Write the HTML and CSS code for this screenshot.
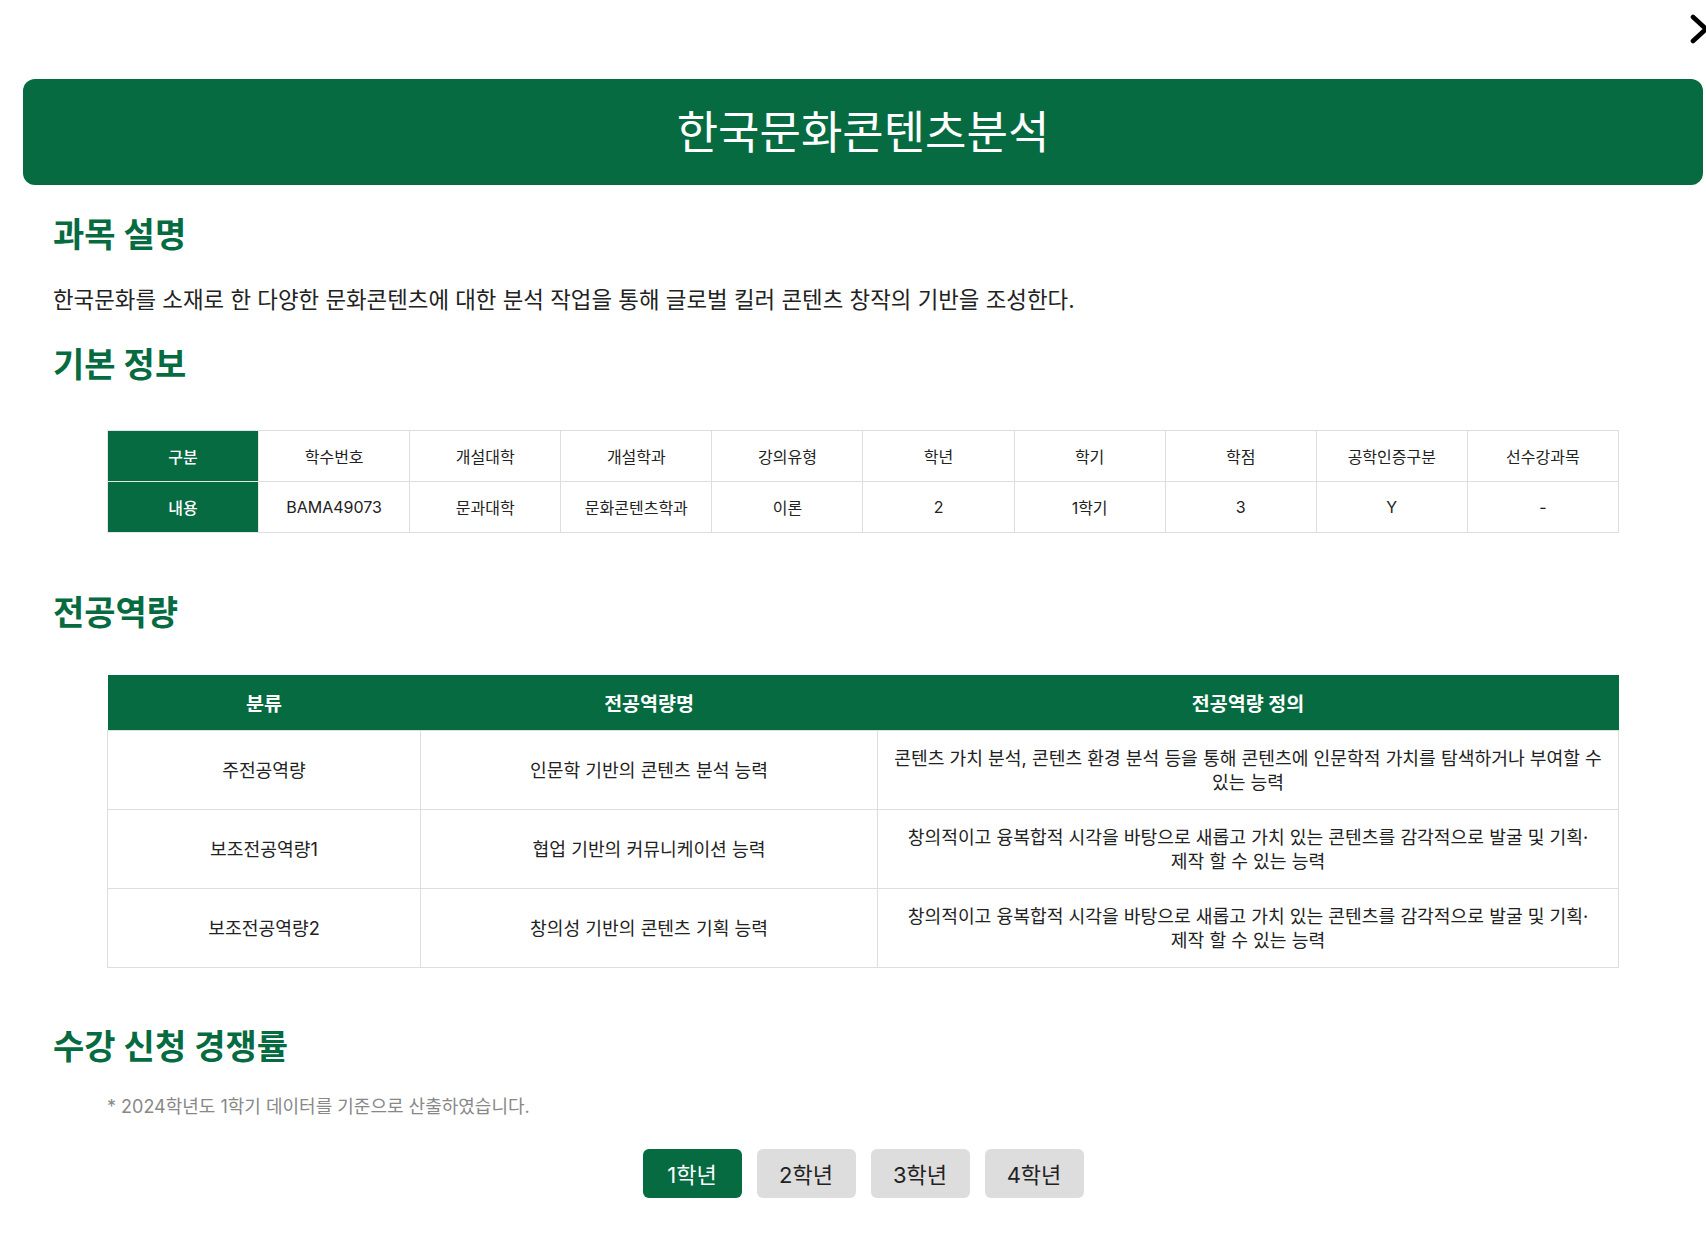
FILE: index.html
```html
<!DOCTYPE html>
<html lang="ko">
<head>
<meta charset="utf-8">
<title>한국문화콘텐츠분석</title>
<link rel="stylesheet" href="styles.css">
</head>
<body>
<div class="modal">
  <button class="close-btn" aria-label="닫기">
    <svg width="20" height="32" viewBox="0 0 20 32"><polyline points="3,4 16,16 3,28" fill="none" stroke="#000" stroke-width="4.6" stroke-linecap="round" stroke-linejoin="round"/></svg>
  </button>
  <header class="title-bar"><h1 class="title">한국문화콘텐츠분석</h1></header>

  <section class="section">
    <h2 class="sec-title">과목 설명</h2>
    <p class="desc">한국문화를 소재로 한 다양한 문화콘텐츠에 대한 분석 작업을 통해 글로벌 킬러 콘텐츠 창작의 기반을 조성한다.</p>
  </section>

  <section class="section">
    <h2 class="sec-title">기본 정보</h2>
    <table class="info-table">
      <tr>
        <th>구분</th><td>학수번호</td><td>개설대학</td><td>개설학과</td><td>강의유형</td><td>학년</td><td>학기</td><td>학점</td><td>공학인증구분</td><td>선수강과목</td>
      </tr>
      <tr>
        <th>내용</th><td>BAMA49073</td><td>문과대학</td><td>문화콘텐츠학과</td><td>이론</td><td>2</td><td>1학기</td><td>3</td><td>Y</td><td>-</td>
      </tr>
    </table>
  </section>

  <section class="section">
    <h2 class="sec-title sec-gap">전공역량</h2>
    <table class="comp-table">
      <thead>
        <tr><th class="c1">분류</th><th class="c2">전공역량명</th><th class="c3">전공역량 정의</th></tr>
      </thead>
      <tbody>
        <tr><td>주전공역량</td><td>인문학 기반의 콘텐츠 분석 능력</td><td>콘텐츠 가치 분석, 콘텐츠 환경 분석 등을 통해 콘텐츠에 인문학적 가치를 탐색하거나 부여할 수<br>있는 능력</td></tr>
        <tr><td>보조전공역량1</td><td>협업 기반의 커뮤니케이션 능력</td><td>창의적이고 융복합적 시각을 바탕으로 새롭고 가치 있는 콘텐츠를 감각적으로 발굴 및 기획·<br>제작 할 수 있는 능력</td></tr>
        <tr><td>보조전공역량2</td><td>창의성 기반의 콘텐츠 기획 능력</td><td>창의적이고 융복합적 시각을 바탕으로 새롭고 가치 있는 콘텐츠를 감각적으로 발굴 및 기획·<br>제작 할 수 있는 능력</td></tr>
      </tbody>
    </table>
  </section>

  <section class="section">
    <h2 class="sec-title sec-gap-last">수강 신청 경쟁률</h2>
    <p class="note">* 2024학년도 1학기 데이터를 기준으로 산출하였습니다.</p>
    <div class="grade-tabs">
      <button class="tab active">1학년</button>
      <button class="tab">2학년</button>
      <button class="tab">3학년</button>
      <button class="tab">4학년</button>
    </div>
  </section>
</div>
</body>
</html>
```
FILE: styles.css
```css
* { box-sizing: border-box; }
html, body { margin: 0; padding: 0; background: #fff; }
body {
  font-family: Inter, "Noto Sans CJK KR", sans-serif;
  color: #222;
  overflow: hidden;
}
.modal {
  position: relative;
  width: 1680px;
  margin-left: 23px;
  padding-top: 79px;
  padding-bottom: 40px;
}
.close-btn {
  position: absolute;
  top: 13px;
  left: 1667px;
  width: 20px;
  height: 32px;
  padding: 0;
  border: 0;
  background: none;
  cursor: pointer;
}
.close-btn svg { display: block; }
.title-bar {
  height: 106px;
  background: #066b41;
  border-radius: 12px;
  display: flex;
  align-items: center;
  justify-content: center;
}
.title {
  margin: 0;
  color: #fff;
  font-size: 45px;
  font-weight: 400;
  line-height: 1;
}
.section { padding: 0 30px; }
.sec-title {
  margin: 30px 0 0;
  color: #066b41;
  font-size: 34px;
  font-weight: 700;
  line-height: 40px;
}
.sec-gap { margin-top: 60px; }
.sec-gap-last { margin-top: 59px; }
.desc {
  margin: 30px 0 0;
  font-size: 22.4px;
  line-height: 30px;
  color: #222;
}
.info-table, .comp-table {
  width: 1512px;
  margin: 45px auto 0;
  border-collapse: collapse;
  table-layout: fixed;
}
.comp-table { margin-top: 42px; }
.info-table th, .info-table td {
  height: 51px;
  border: 1px solid #dedede;
  text-align: center;
  font-size: 16px;
  font-weight: 400;
  padding: 0 4px;
}
.info-table th {
  background: #066b41;
  color: #fff;
  font-weight: 500;
  border-color: #e6e6e6;
}
.comp-table th {
  height: 55px;
  background: #066b41;
  color: #fff;
  font-size: 19.5px;
  font-weight: 700;
  border: 0;
}
.comp-table .c1 { width: 313px; }
.comp-table .c2 { width: 457px; }
.comp-table td {
  height: 79px;
  border: 1px solid #dedede;
  text-align: center;
  font-size: 18.2px;
  line-height: 24px;
  padding: 0 12px;
}
.note {
  margin: 28px 0 0;
  padding-left: 54px;
  font-size: 18px;
  line-height: 24px;
  color: #888;
}
.grade-tabs {
  display: flex;
  justify-content: center;
  gap: 15px;
  margin-top: 30px;
}
.tab {
  width: 99px;
  height: 49px;
  border: 0;
  border-radius: 6px;
  background: #dddddd;
  color: #222;
  font-family: Inter, "Noto Sans CJK KR", sans-serif;
  font-size: 22px;
  padding: 0;
}
.tab.active { background: #066b41; color: #fff; }
```
